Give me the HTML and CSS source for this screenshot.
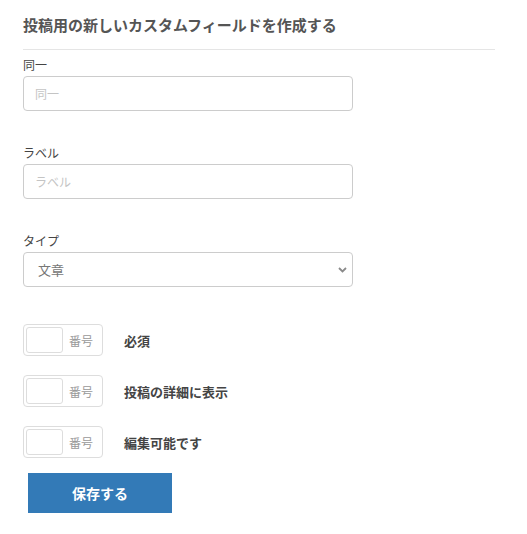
FILE: index.html
```html
<!DOCTYPE html>
<html lang="ja">
<head>
<meta charset="utf-8">
<link rel="stylesheet" href="styles.css">
</head>
<body>
<div class="panel">
  <h3 class="title">投稿用の新しいカスタムフィールドを作成する</h3>
  <div class="group first">
    <label class="label">同一</label>
    <input class="input" type="text" placeholder="同一">
  </div>
  <div class="group">
    <label class="label">ラベル</label>
    <input class="input" type="text" placeholder="ラベル">
  </div>
  <div class="group">
    <label class="label">タイプ</label>
    <div class="select">
      <span class="select-text">文章</span>
      <svg class="chevron" width="9" height="6" viewBox="0 0 9 6"><path d="M1 1 L4.5 4.5 L8 1" fill="none" stroke="#8a8a8a" stroke-width="1.8"/></svg>
    </div>
  </div>
  <div class="toggles">
    <div class="toggle-row">
      <div class="toggle"><span class="knob"></span><span class="toggle-text">番号</span></div>
      <span class="toggle-label">必須</span>
    </div>
    <div class="toggle-row">
      <div class="toggle"><span class="knob"></span><span class="toggle-text">番号</span></div>
      <span class="toggle-label">投稿の詳細に表示</span>
    </div>
    <div class="toggle-row">
      <div class="toggle"><span class="knob"></span><span class="toggle-text">番号</span></div>
      <span class="toggle-label">編集可能です</span>
    </div>
  </div>
  <button class="save">保存する</button>
</div>
</body>
</html>
```
FILE: styles.css
```css
* { box-sizing: border-box; }
body {
  margin: 0;
  background: #fff;
  font-family: "Noto Sans CJK JP", "Noto Sans", sans-serif;
  color: #333;
}
.panel {
  margin-left: 23px;
  width: 472px;
  padding-top: 15px;
}
.title {
  margin: 0;
  font-size: 15px;
  line-height: 20px;
  font-weight: 700;
  color: #555;
  padding-bottom: 14px;
  border-bottom: 1px solid #e5e5e5;
}
.group { margin-top: 33px; }
.group.first { margin-top: 6px; }
.label {
  display: block;
  font-size: 12px;
  line-height: 17px;
  margin-bottom: 3px;
  color: #444;
}
.input {
  display: block;
  width: 330px;
  height: 35px;
  border: 1px solid #ccc;
  border-radius: 4px;
  padding: 0 11px;
  font-family: inherit;
  font-size: 12px;
  color: #555;
  outline: none;
}
.input::placeholder { color: #c4c4c4; }
.select {
  width: 330px;
  height: 35px;
  border: 1px solid #ccc;
  border-radius: 4px;
  padding: 0 5px 0 14px;
  display: flex;
  align-items: center;
  justify-content: space-between;
}
.select-text { font-size: 13px; color: #777; }
.chevron { margin-top: 1px; }
.toggles {
  margin-top: 37px;
  display: flex;
  flex-direction: column;
  gap: 19px;
}
.toggle-row {
  display: flex;
  align-items: center;
}
.toggle {
  width: 80px;
  height: 32px;
  border: 1px solid #ddd;
  border-radius: 4px;
  padding: 2px;
  display: flex;
  align-items: center;
}
.knob {
  width: 37px;
  height: 26px;
  border: 1px solid #ddd;
  border-radius: 3px;
  background: #fff;
}
.toggle-text {
  margin-left: 6px;
  font-size: 12px;
  color: #999;
}
.toggle-label {
  margin-left: 21px;
  font-size: 13px;
  font-weight: 700;
  color: #444;
}
.save {
  display: block;
  margin: 15px 0 0 5px;
  width: 144px;
  height: 40px;
  border: none;
  border-radius: 0;
  background: #337ab7;
  color: #fff;
  font-family: inherit;
  font-size: 14px;
  font-weight: 700;
}
```
